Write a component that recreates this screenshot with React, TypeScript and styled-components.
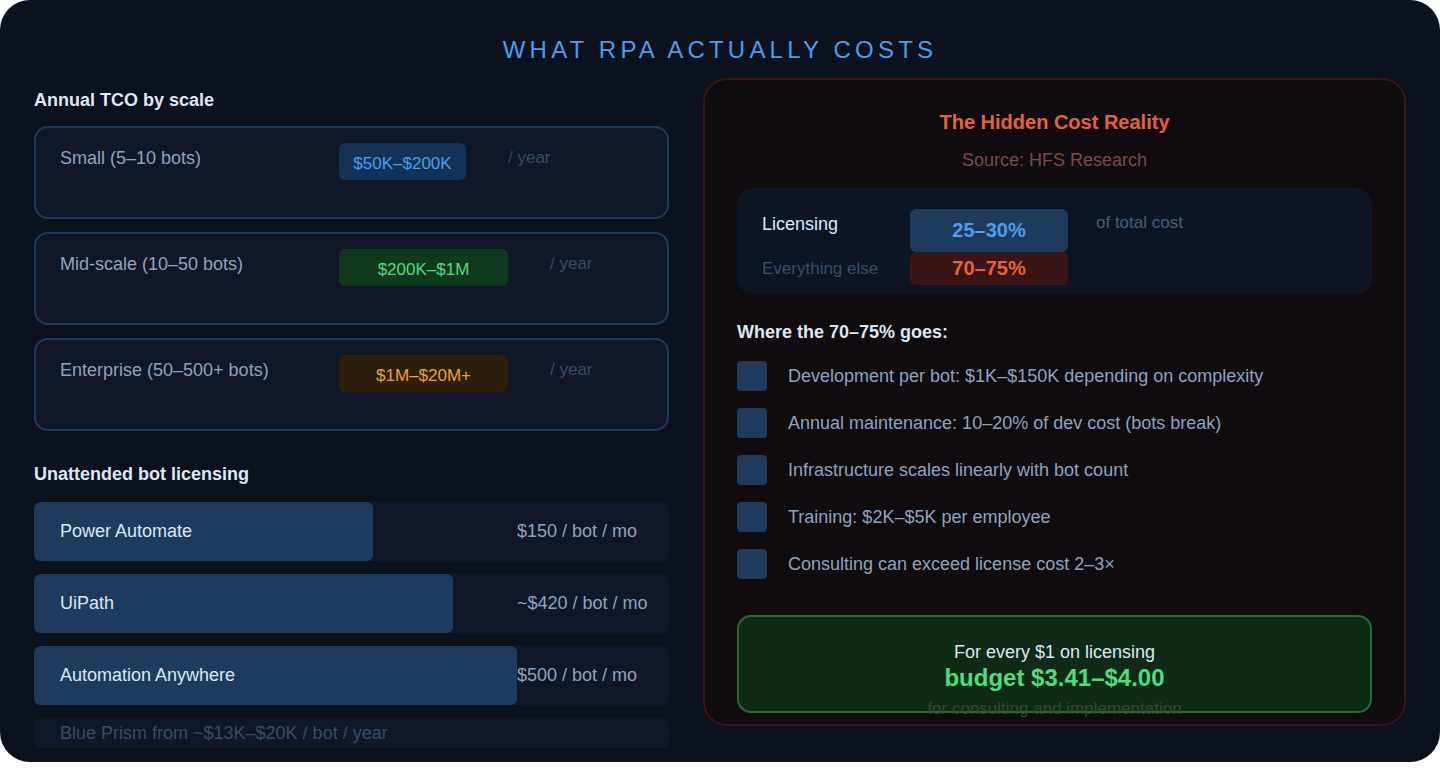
import React from "react";
import styled, { createGlobalStyle } from "styled-components";

const Global = createGlobalStyle`
  html, body { margin: 0; padding: 0; background: #ffffff; }
  body { font-family: "Liberation Sans", Arial, sans-serif; }
`;

const Frame = styled.div`
  width: 1440px; height: 762px; box-sizing: border-box;
  background: #0b111d; border-radius: 30px; overflow: hidden;
  padding: 36px 34px 0 34px;
`;
const Title = styled.h1`
  margin: 0; text-align: center; font-weight: 400; font-size: 24px;
  letter-spacing: 4.2px; color: #4a9eed; line-height: 28px;
`;
const Columns = styled.div`
  display: grid; grid-template-columns: 635px 703px; column-gap: 34px; margin-top: 25px;
`;
const Left = styled.div` display: flex; flex-direction: column; `;
const Heading = styled.h2`
  margin: 0; font-size: 18px; font-weight: 700; color: #dce8f5; line-height: 22px;
`;
const Cards = styled.div` display: flex; flex-direction: column; gap: 13px; margin: 15px 0 0; `;
const Card = styled.div`
  height: 93px; box-sizing: border-box; border: 2px solid #1e3a5c; border-radius: 14px;
  background: #0f1729; display: flex; align-items: flex-start; padding: 18px 0 0 24px;
`;
const CardLabel = styled.div` width: 279px; font-size: 18px; color: #8fa3bf; line-height: 24px; `;
const Pill = styled.div<{ $bg: string; $fg: string; $w: number }>`
  width: ${p => p.$w}px; height: 37px; margin-top: -3px; border-radius: 6px; background: ${p => p.$bg};
  color: ${p => p.$fg}; font-size: 17px; display: flex; align-items: center; justify-content: center;
  padding-top: 4px; box-sizing: border-box;
`;
const Year = styled.div` margin-left: 42px; font-size: 17px; color: #3a4d66; line-height: 24px; `;
const Bars = styled.div` display: flex; flex-direction: column; gap: 13px; margin-top: 17px; `;
const Track = styled.div<{ $h?: number }>`
  position: relative; height: ${p => p.$h ?? 59}px; border-radius: 6px; background: #0f1729;
  display: flex; align-items: center; overflow: hidden;
`;
const Fill = styled.div`
  position: absolute; left: 0; top: 0; bottom: 0; background: #1e3a5c; border-radius: 6px;
`;
const BarLabel = styled.div<{ $dim?: boolean }>`
  position: relative; padding-left: 26px; width: 457px; font-size: 18px;
  color: ${p => (p.$dim ? "#3a4d66" : "#dce8f5")};
`;
const BarPrice = styled.div` position: relative; font-size: 18px; color: #8fa3bf; `;

const Panel = styled.div`
  height: 648px; box-sizing: border-box; margin-top: -11px; border: 2px solid #3a1515;
  border-radius: 24px; background: #100b0e; padding: 30px 32px 0 32px;
  display: flex; flex-direction: column; align-items: stretch;
`;
const PanelTitle = styled.div` text-align: center; font-size: 20px; font-weight: 700; color: #e8603c; line-height: 24px; `;
const Source = styled.div` text-align: center; font-size: 18px; color: #7a4a4a; margin-top: 15px; line-height: 22px; `;
const Split = styled.div`
  margin-top: 17px; height: 106px; border-radius: 16px; background: #0d1525;
  display: grid; grid-template-columns: 148px 158px auto; grid-template-rows: 43px 33px;
  padding: 21px 0 0 25px; box-sizing: border-box; align-items: start;
`;
const SplitLabel = styled.div<{ $dim?: boolean }>`
  font-size: ${p => (p.$dim ? 17 : 18)}px; color: ${p => (p.$dim ? "#3a4d66" : "#dce8f5")};
  padding-top: ${p => (p.$dim ? 0 : 3)}px; line-height: 24px; align-self: ${p => (p.$dim ? "center" : "start")};
`;
const SplitPill = styled.div<{ $bg: string; $fg: string }>`
  height: 100%; background: ${p => p.$bg}; color: ${p => p.$fg}; border-radius: 6px;
  font-size: 20px; font-weight: 700; display: flex; align-items: center; justify-content: center;
`;
const Note = styled.div` font-size: 17px; color: #4a5d7a; padding: 4px 0 0 28px; `;
const SubHead = styled(Heading)` margin-top: 27px; `;
const List = styled.div` display: flex; flex-direction: column; gap: 17px; margin-top: 18px; `;
const Item = styled.div` display: flex; align-items: center; gap: 21px; font-size: 18px; color: #8fa3bf; `;
const Square = styled.div` width: 30px; height: 30px; border-radius: 4px; background: #1e3a5c; flex: none; `;
const Callout = styled.div`
  margin-top: 36px; height: 98px; box-sizing: border-box; border: 2px solid #2a6a35; border-radius: 14px;
  background: #0f2a15; display: flex; flex-direction: column; align-items: center; padding-top: 24px;
`;
const CallLine = styled.div` font-size: 18px; color: #dce8f5; line-height: 22px; `;
const CallBig = styled.div` font-size: 24px; font-weight: 700; color: #4ade80; line-height: 30px; `;
const CallSmall = styled.div` font-size: 17px; color: #2d4a35; margin-top: 6px; line-height: 20px; `;

const tiers = [
  { label: "Small (5–10 bots)", price: "$50K–$200K", bg: "#133256", fg: "#4a9eed", w: 127 },
  { label: "Mid-scale (10–50 bots)", price: "$200K–$1M", bg: "#103a1e", fg: "#4ade80", w: 169 },
  { label: "Enterprise (50–500+ bots)", price: "$1M–$20M+", bg: "#2c1f0c", fg: "#f0a030", w: 169 },
];
const bars = [
  { label: "Power Automate", price: "$150 / bot / mo", w: 339 },
  { label: "UiPath", price: "~$420 / bot / mo", w: 419 },
  { label: "Automation Anywhere", price: "$500 / bot / mo", w: 483 },
];
const items = [
  "Development per bot: $1K–$150K depending on complexity",
  "Annual maintenance: 10–20% of dev cost (bots break)",
  "Infrastructure scales linearly with bot count",
  "Training: $2K–$5K per employee",
  "Consulting can exceed license cost 2–3×",
];

export default function App() {
  return (
    <>
      <Global />
      <Frame>
        <Title>WHAT RPA ACTUALLY COSTS</Title>
        <Columns>
          <Left>
            <Heading>Annual TCO by scale</Heading>
            <Cards>
              {tiers.map(t => (
                <Card key={t.label}>
                  <CardLabel>{t.label}</CardLabel>
                  <Pill $bg={t.bg} $fg={t.fg} $w={t.w}>{t.price}</Pill>
                  <Year>/ year</Year>
                </Card>
              ))}
            </Cards>
            <Heading style={{ marginTop: 32 }}>Unattended bot licensing</Heading>
            <Bars>
              {bars.map(b => (
                <Track key={b.label}>
                  <Fill style={{ width: b.w }} />
                  <BarLabel>{b.label}</BarLabel>
                  <BarPrice>{b.price}</BarPrice>
                </Track>
              ))}
              <Track $h={30}>
                <BarLabel $dim>Blue Prism from ~$13K–$20K / bot / year</BarLabel>
              </Track>
            </Bars>
          </Left>
          <Panel>
            <PanelTitle>The Hidden Cost Reality</PanelTitle>
            <Source>Source: HFS Research</Source>
            <Split>
              <SplitLabel>Licensing</SplitLabel>
              <SplitPill $bg="#1e3a5c" $fg="#4a9eed">25–30%</SplitPill>
              <Note>of total cost</Note>
              <SplitLabel $dim>Everything else</SplitLabel>
              <SplitPill $bg="#3a1515" $fg="#e8603c">70–75%</SplitPill>
            </Split>
            <SubHead>Where the 70–75% goes:</SubHead>
            <List>
              {items.map(i => (
                <Item key={i}><Square />{i}</Item>
              ))}
            </List>
            <Callout>
              <CallLine>For every $1 on licensing</CallLine>
              <CallBig>budget $3.41–$4.00</CallBig>
              <CallSmall>for consulting and implementation</CallSmall>
            </Callout>
          </Panel>
        </Columns>
      </Frame>
    </>
  );
}
